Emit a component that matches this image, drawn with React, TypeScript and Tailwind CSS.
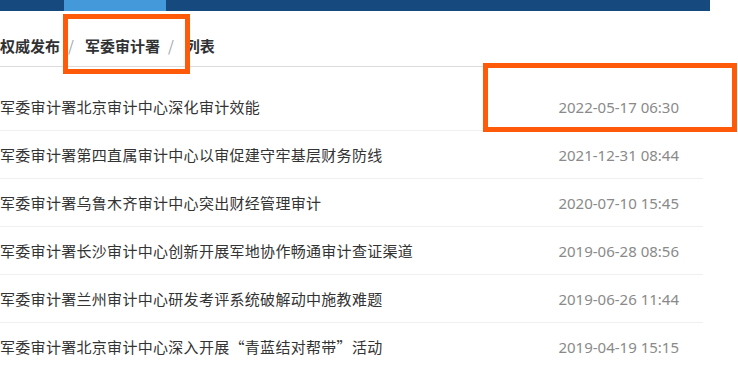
import React from "react";

const rows = [
  { t: "军委审计署北京审计中心深化审计效能", d: "2022-05-17 06:30" },
  { t: "军委审计署第四直属审计中心以审促建守牢基层财务防线", d: "2021-12-31 08:44" },
  { t: "军委审计署乌鲁木齐审计中心突出财经管理审计", d: "2020-07-10 15:45" },
  { t: "军委审计署长沙审计中心创新开展军地协作畅通审计查证渠道", d: "2019-06-28 08:56" },
  { t: "军委审计署兰州审计中心研发考评系统破解动中施教难题", d: "2019-06-26 11:44" },
  { t: "军委审计署北京审计中心深入开展“青蓝结对帮带”活动", d: "2019-04-19 15:15" },
];

const cjk = { fontFamily: '"Noto Sans CJK SC", "Noto Sans", sans-serif' };

export default function App() {
  return (
    <div lang="zh-CN" className="relative w-[738px] h-[367px] overflow-hidden bg-white" style={cjk}>
      <div className="w-[710px] h-[11px] bg-[#164a7f] flex">
        <div className="ml-[64px] w-[102px] h-full bg-[#4499db]" />
      </div>
      <div className="w-[710px] h-[56px] border-b border-[#dcdcdc] pt-[23px]">
        <div className="flex items-center h-[24px] text-[15px] font-bold text-[#303133]">
          <span>权威发布</span>
          <span className="ml-[8px] mr-[11px] font-normal text-[#a0a4ad]">/</span>
          <span>军委审计署</span>
          <span className="ml-[8px] mr-[11px] font-normal text-[#a0a4ad]">/</span>
          <span>列表</span>
        </div>
      </div>
      <ul className="mt-[16px] w-[703px]">
        {rows.map((r) => (
          <li key={r.d} className="h-[48px] border-b border-[#efefef] flex items-center justify-between pr-[24px] pt-[1px]">
            <span className="text-[15px] tracking-[0.3px] text-[#333333]">{r.t}</span>
            <span className="text-[15px] text-[#8a8a8a]" style={{ fontFamily: '"Noto Sans", sans-serif' }}>{r.d}</span>
          </li>
        ))}
      </ul>
      <div className="absolute left-[63px] top-[14px] w-[127px] h-[60px] border-[5px] border-[#ff5a0a]" />
      <div className="absolute left-[483px] top-[63px] w-[254px] h-[69px] border-[5px] border-[#ff5a0a]" />
    </div>
  );
}
